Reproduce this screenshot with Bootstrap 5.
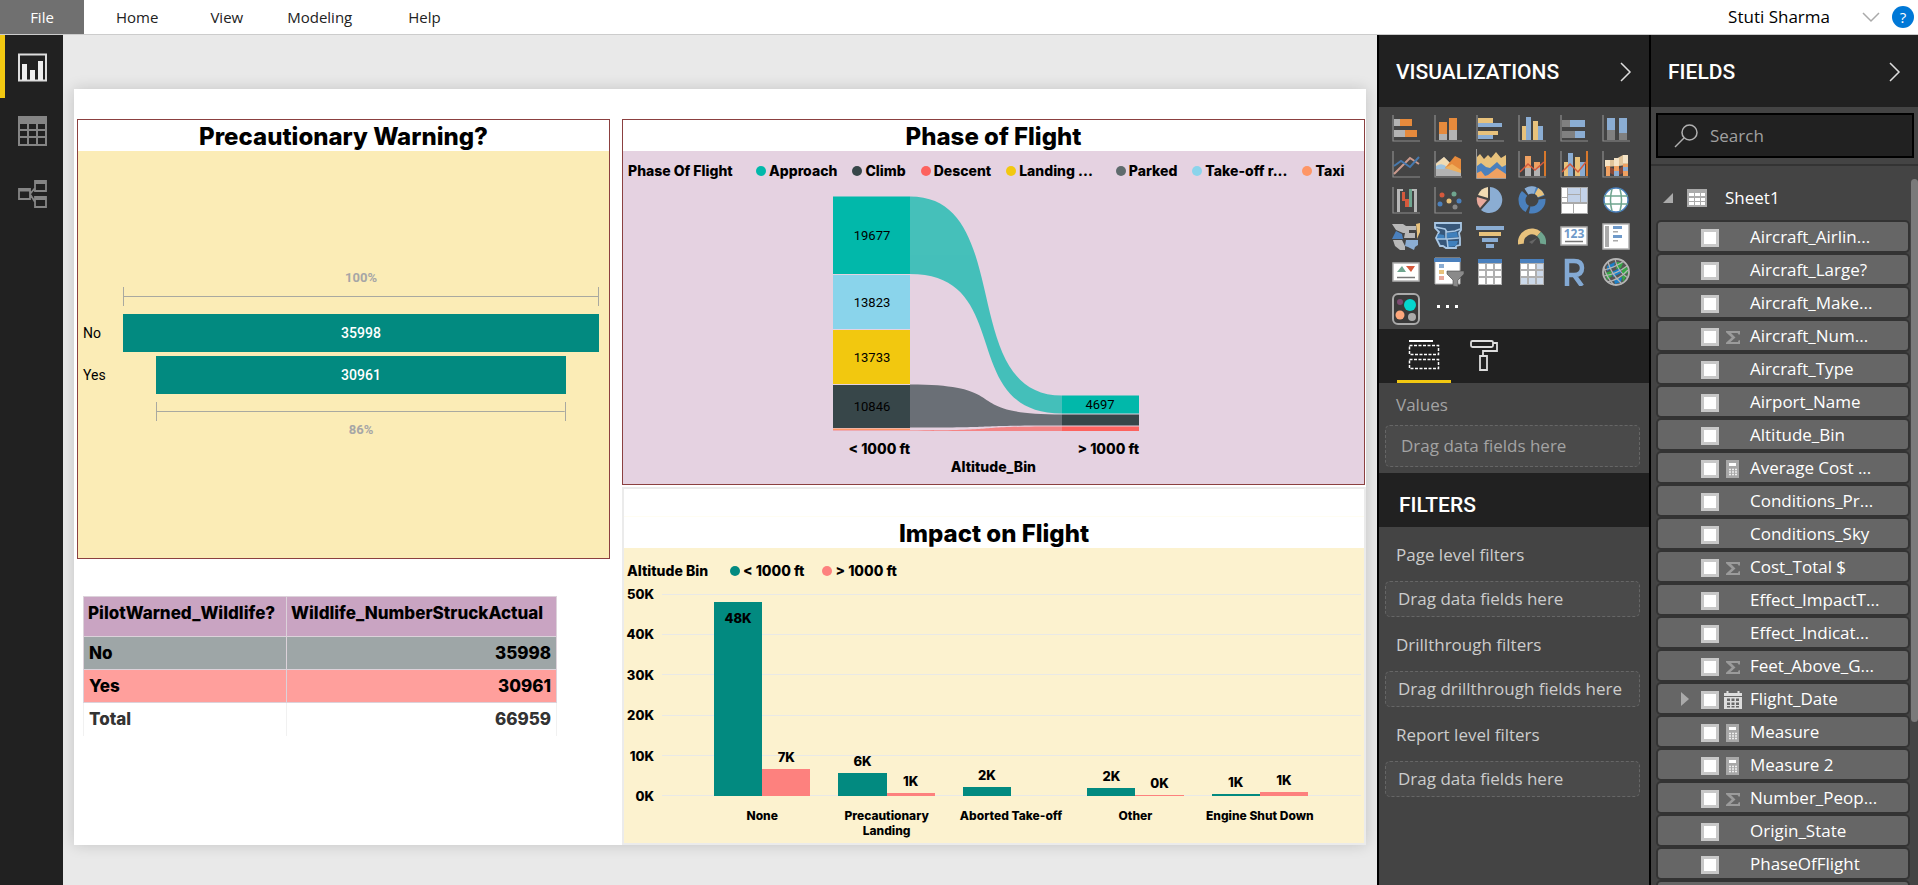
<!DOCTYPE html>
<html lang="en">
<head>
<meta charset="utf-8">
<meta name="viewport" content="width=device-width, initial-scale=1">
<title>Wildlife strikes report</title>
<link href="https://cdn.jsdelivr.net/npm/bootstrap@5.3.0/dist/css/bootstrap.min.css" rel="stylesheet">
<style>
:root{--ui:"Open Sans","Segoe UI",sans-serif;--din:Roboto,"DIN",sans-serif;--heavy:Inter,"Arial Black",sans-serif;--ink:#212121;--pane:#444;--teal:#028a80;--pink:#fd817e}
body{font-family:var(--ui);font-size:17px;line-height:24px;color:#000;background:#e9e9e9}
ul{list-style:none;margin:0;padding:0}
svg{display:block}
button{border:0;background:none;padding:0;color:inherit}
.shell{height:100vh;min-height:700px;overflow:hidden}
/* menu bar */
.topbar{height:35px;background:#fff;border-bottom:1px solid #ccc}
.topbar .tab{color:#222;text-decoration:none;font-size:15px}
.topbar .file-tab{width:84px;background:#707070;color:#fff}
.topbar .tab-wide{margin-right:2px;padding-right:2px}
.help-dot{width:22px;height:22px;border-radius:50%;background:#0078d7;color:#fff;font-size:15px;line-height:20px}
/* view switcher */
.rail{width:63px;background:var(--ink)}
.rail button{height:63px;width:63px;border-left:5px solid transparent;padding:2px 0 0 13px}
.rail button.on{border-left-color:#f2c811}
/* report canvas */
.desk{min-width:0;padding:54px 11px 40px}
.sheet{background:#fff;box-shadow:0 0 14px rgba(0,0,0,.16);padding:30px 0 0 3px;gap:12px;font-family:var(--heavy);font-weight:800}
.col-l{flex:533 1 0;min-width:0}
.col-r{flex:744 1 0;min-width:0;gap:2px}
.visual{border:1px solid #8b4040;min-height:0}
.visual h2{font-size:24px;line-height:29px;padding-top:2px;font-weight:800;margin:0;text-align:center;background:#fff}
.v-funnel{background:#fbecb6;flex:439 1 0}
.v-ribbon{background:#e5d2e1;flex:366 1 0;margin-right:1px}
.v-bars{background:#fcf2cf;border:2px solid #ebebeb;flex:356 1 0}
.v-bars .blank{height:28px;background:#fff;border-bottom:1px solid #fffdf2}
.below{flex:250 1 0;padding:37px 0 0 6px}
/* funnel */
.funnel{font-family:var(--din);font-weight:400;font-size:14px;padding-right:10px}
.funnel .row-f{display:grid;grid-template-columns:45px 1fr;align-items:center}
.funnel .name{padding-left:5px}
.funnel .fill{height:38px;background:var(--teal);color:#fff;font-weight:500;line-height:38px;text-align:center;margin:0 auto}
.funnel .pct{color:#a6a6a6;font-weight:700;font-size:13px;line-height:18px;text-align:center;grid-column:2}
.bracket{grid-column:2;height:19px;border:solid #a9a9a0;border-width:0 1px;margin:0 auto;background:linear-gradient(#a9a9a0,#a9a9a0) center/100% 1px no-repeat}
/* legends */
.legend{height:37px;font-size:14px;gap:15px;padding:2px 0 0 5px;white-space:nowrap}
.legend .head{min-width:113px}
.legend li,.legend ul{display:flex;align-items:center}
.legend ul{gap:15px}
.legend li::before{content:"";width:10px;height:10px;border-radius:50%;background:var(--c);margin-right:3px}
.v-bars .legend{padding-left:3px}
.v-bars .legend .head{min-width:88px}
.v-bars .legend ul{gap:18px}
/* clustered columns */
.plotbox{flex:1;min-height:0;padding:5px 3px 47px 0}
.axis-y{width:30px;margin:-8px 8px -8px 0;text-align:right;font-size:13px;line-height:16px}
.axis-y,.gridlines{display:flex;flex-direction:column;justify-content:space-between}
.plot{flex:1;padding:0 39px 0 38px}
.gridlines{position:absolute;inset:0}
.gridlines i{height:1px;background:#e9e9e6}
.cat{flex:1;padding:0 14px}
.cat>div{flex:1;display:flex;flex-direction:column;justify-content:flex-end;text-align:center;font-size:13px;line-height:16px}
.cat .lab{margin-bottom:4px}
.cat i{display:block;background:var(--teal);font-style:normal;padding-top:8px}
.cat i.flat{padding:0}
.cat>div+div i{background:var(--pink)}
.cats{position:absolute;left:38px;right:39px;top:100%;padding-top:12px;display:flex;font-size:12px;line-height:15px;text-align:center}
.cats li{flex:1;min-width:0}
/* summary table */
.sum{font-size:17px;line-height:24px;border-collapse:collapse;width:474px;max-width:100%}
.sum th,.sum td{padding:4px 5px 4px 5px;border:1px solid #dcd2da;font-weight:800}
.sum td+td,.sum th+td{text-align:right}
.sum thead th{background:#c9a4c2;height:40px;padding:4px 4px 11px 4px}
.sum thead th:first-child{width:203px}
.sum .r-no>*{background:#9ea6a7}
.sum .r-yes>*{background:#ff9f9c}
.sum tfoot>tr>*{color:#333;border-color:#f1f1f1;border-bottom-color:transparent}
/* right panes */
.pane{background:var(--pane);border-left:2px solid #000;color:#fff}
.pane-v{width:272px}
.pane-f{width:269px}
.pane-head{background:var(--ink);height:72px;padding:2px 17px 0 17px}
.pane-head h2,.sub-head{font-family:var(--din);font-size:21px;line-height:24px;font-weight:500;margin:0}
.gallery{display:grid;grid-template-columns:repeat(6,42px);grid-auto-rows:36px;padding:6px 0 0 13px}
.gallery button{width:30px;height:30px}
.tabs{height:54px;background:var(--ink);padding-left:18px;gap:6px}
.tabs button{width:54px;height:54px;border-bottom:3px solid transparent}
.tabs button.on{border-color:#f2c811}
.well{margin:0 9px 0 6px;border:1px dashed #666;border-radius:5px;background:#4a4a4a;height:36px;padding:0 12px;line-height:34px;color:#ccc}
.well-label{padding:16px 17px 14px;color:#ccc;line-height:24px}
.values .well{height:42px;line-height:40px;padding:0 15px}
.values .well,.values .well-label{color:#a3a3a3}
.values .well-label{padding:10px 17px 8px}
.values{padding-bottom:6px}
.sub-head{height:54px;background:var(--ink);padding:20px 20px 10px}
.search{margin:6px 4px 6px 5px;height:45px;border:2px solid #000;background:var(--ink);padding-left:16px;gap:10px}
.search input{border:0;background:none;color:#fff;outline:0;min-width:0;width:100%;font-size:17px}
.search input::placeholder{color:#a0a0a0}
.tree{border-top:2px solid #333;padding:10px 0 0 5px;position:relative;overflow:hidden;min-height:0}
.tree .root{height:44px;padding-left:7px;gap:14px}
.tree li{height:33px;margin-right:8px;border:2px solid #333;border-radius:5px;background:#666;box-sizing:border-box}
.tree label{display:flex;align-items:center;height:29px;padding-left:43px;position:relative}
.tree label svg{width:18px;height:18px;margin:3px 8px 0 5px;flex:none}
.tree label svg.caret{position:absolute;left:23px;top:8px;margin:0;width:8px;height:14px}
.tree input{appearance:none;width:18px;height:18px;border:3px solid #c8c8c8;background:#fff;margin:3px 0 0;flex:none}
.tree label>span{line-height:24px;white-space:nowrap}
.tree label>input+span{margin-left:31px}
.thumb{position:absolute;right:0;top:13px;width:7px;height:543px;background:#7a7a7a;border-radius:4px}
</style>
</head>
<body>
<svg width="0" height="0" class="position-absolute" aria-hidden="true">
  <symbol id="sum" viewBox="0 0 18 18"><path d="M2 3h14v3.500h-1.500L13.500 5H7l4.500 4.500L6.500 14h7.500l.7-1.700H16V16H2v-1.200L7.700 9.500 2 4.200z" fill="#9b9b9b"/></symbol>
  <symbol id="calc" viewBox="0 0 18 18"><path d="M2 0h13v18H2z" fill="#a8a8a8"/><path d="M5 3h7v3H5z" fill="#fff"/><path d="M5 9.500h8M5 12h8M5 14.500h8" stroke="#eee" stroke-width="1.500" stroke-dasharray="2 1"/></symbol>
  <symbol id="cal" viewBox="0 0 18 18"><path d="M0 2h18v16H0z" fill="#ddd"/><path d="M0 5.500h18" stroke="#666"/><path d="M3.500 0v3M14.500 0v3" stroke="#ddd" stroke-width="2"/><path d="M3 7.500h3v2.500H3zM7.500 7.500h3v2.500h-3zM12 7.500h3v2.500h-3zM3 11.500h3V14H3zM7.500 11.500h3V14h-3zM12 11.500h3V14h-3zM3 15h3v1.500H3zM7.500 15h3v1.500h-3zM12 15h3v1.500h-3z" fill="#666"/></symbol>
  <symbol id="axis" viewBox="0 0 28 28"><path d="M1 1v26h27" fill="none" stroke="#8c8c8c" stroke-width="1.200"/></symbol>
</svg>

<div class="shell d-flex flex-column">
  <header class="topbar d-flex align-items-center flex-shrink-0">
    <nav class="d-flex align-items-center h-100">
      <a href="#" class="tab file-tab h-100 d-flex align-items-center justify-content-center">File</a>
      <a href="#" class="tab ms-4 ps-2">Home</a>
      <a href="#" class="tab tab-wide ms-5 ps-1">View</a>
      <a href="#" class="tab ms-4 ps-3">Modeling</a>
      <a href="#" class="tab ms-5 ps-2">Help</a>
    </nav>
    <div class="ms-auto d-flex align-items-center pe-1">
      <span class="me-4 pe-2">Stuti Sharma</span>
      <button type="button" aria-label="Account menu" class="me-2"><svg width="18" height="12" viewBox="0 0 18 12"><path d="M1 2l8 8 8-8" fill="none" stroke="#aaa" stroke-width="1.500"/></svg></button>
      <button type="button" class="help-dot ms-1" aria-label="Help">?</button>
    </div>
  </header>

  <div class="d-flex flex-fill" style="min-height:0">
    <aside class="rail flex-shrink-0 d-flex flex-column">
      <button type="button" class="on" aria-label="Report"><svg width="30" height="30" viewBox="0 0 30 30"><path d="M1 1.500h27v26H1z" fill="none" stroke="#ddd" stroke-width="2"/><path d="M4 11h5v16H4zM12 17h5v10h-5zM20 8h5v19h-5z" fill="#eee"/></svg></button>
      <button type="button" aria-label="Data"><svg width="30" height="30" viewBox="0 0 30 30"><path d="M0 0h29v30H0z" fill="#858585"/><path d="M2 8h7v5H2zM11 8h7v5h-7zM20 8h7v5h-7zM2 15h7v5H2zM11 15h7v5h-7zM20 15h7v5h-7zM2 22h7v6H2zM11 22h7v6h-7zM20 22h7v6h-7z" fill="#212121"/></svg></button>
      <button type="button" aria-label="Model"><svg width="30" height="30" viewBox="0 0 30 30" fill="none" stroke="#858585" stroke-width="1.800"><path d="M1 10h11v10H1zM17 2h11v10H17zM17 18h11v10H17zM12 15l5-6M12 15l5 8"/><path d="M1 11h11M17 3.500h11M17 19.500h11" stroke-width="3"/></svg></button>
    </aside>

    <main class="desk flex-fill d-flex">
      <div class="sheet d-flex flex-fill">
        <div class="col-l d-flex flex-column">
          <section class="visual v-funnel d-flex flex-column">
            <h2>Precautionary Warning?</h2>
            <div class="funnel flex-fill d-flex flex-column justify-content-center">
              <div class="row-f"><span class="pct">100%</span></div>
              <div class="row-f mb-2"><div class="bracket w-100"></div></div>
              <div class="row-f mb-1"><span class="name">No</span><div class="fill" style="width:100%">35998</div></div>
              <div class="row-f mb-2"><span class="name">Yes</span><div class="fill" style="width:86%">30961</div></div>
              <div class="row-f"><div class="bracket" style="width:86%"></div></div>
              <div class="row-f"><span class="pct">86%</span></div>
            </div>
          </section>
          <div class="below">
            <table class="sum">
              <thead><tr><th>PilotWarned_Wildlife?</th><th>Wildlife_NumberStruckActual</th></tr></thead>
              <tbody><tr class="r-no"><td>No</td><td>35998</td></tr><tr class="r-yes"><td>Yes</td><td>30961</td></tr></tbody>
              <tfoot><tr><th>Total</th><td>66959</td></tr></tfoot>
            </table>
          </div>
        </div>

        <div class="col-r d-flex flex-column">
          <section class="visual v-ribbon d-flex flex-column">
            <h2>Phase of Flight</h2>
            <div class="legend d-flex align-items-center">
              <span class="head">Phase Of Flight</span>
              <ul>
                <li style="--c:#01b8aa">Approach</li><li style="--c:#374649">Climb</li><li style="--c:#fd625e">Descent</li><li class="me-2" style="--c:#f2c80f">Landing ...</li><li style="--c:#5f6b6d">Parked</li><li style="--c:#8ad4eb">Take-off r...</li><li style="--c:#fe9666">Taxi</li>
              </ul>
            </div>
            <svg class="w-100 flex-fill" style="min-height:0" viewBox="0 0 741 295" role="img" aria-label="Strikes by phase of flight and altitude">
              <g opacity=".7">
                <path d="M287 8C393 8 333 207 439 207V225C333 225 393 85.500 287 85.500z" fill="#01b8aa"/>
                <path d="M287 196C393 196 333 226 439 226V237C333 237 393 239 287 239z" fill="#374649"/>
                <path d="M210 242H287C393 242 333 238 439 238V242.500H210z" fill="#fd625e"/>
              </g>
              <path d="M210 8h77v77.500h-77zM439 207h77v18h-77z" fill="#01b8aa"/>
              <path d="M210 86.500h77v54h-77z" fill="#8ad4eb"/>
              <path d="M210 141.500h77v54h-77z" fill="#f2c80f"/>
              <path d="M210 196.500h77v43h-77zM439 226h77v11h-77z" fill="#374649"/>
              <path d="M210 240h77v1.500h-77z" fill="#fe9666"/>
              <path d="M439 238h77v4.500h-77z" fill="#fd625e"/>
              <g font-family="Roboto, sans-serif" font-size="13" font-weight="400" text-anchor="middle">
                <text x="249" y="52">19677</text><text x="249" y="119">13823</text><text x="249" y="174">13733</text><text x="249" y="223">10846</text><text x="477" y="221">4697</text>
              </g>
              <g font-size="14" text-anchor="end"><text x="287" y="266">&lt; 1000 ft</text><text x="516" y="266">&gt; 1000 ft</text><text x="413" y="284">Altitude_Bin</text></g>
            </svg>
          </section>

          <section class="visual v-bars d-flex flex-column">
            <div class="blank"></div>
            <h2>Impact on Flight</h2>
            <div class="legend d-flex align-items-center mt-1"><span class="head">Altitude Bin</span><ul><li style="--c:#028a80">&lt; 1000 ft</li><li style="--c:#fd817e">&gt; 1000 ft</li></ul></div>
            <div class="plotbox d-flex">
              <div class="axis-y"><span>50K</span><span>40K</span><span>30K</span><span>20K</span><span>10K</span><span>0K</span></div>
              <div class="plot position-relative d-flex">
                <div class="gridlines"><i></i><i></i><i></i><i></i><i></i><i></i></div>
                <div class="cat d-flex position-relative"><div><i style="height:96%">48K</i></div><div><span class="lab">7K</span><i class="flat" style="height:13.500%"></i></div></div>
                <div class="cat d-flex position-relative"><div><span class="lab">6K</span><i class="flat" style="height:11.500%"></i></div><div><span class="lab">1K</span><i class="flat" style="height:1.500%"></i></div></div>
                <div class="cat d-flex position-relative"><div><span class="lab">2K</span><i class="flat" style="height:4.500%"></i></div><div></div></div>
                <div class="cat d-flex position-relative"><div><span class="lab">2K</span><i class="flat" style="height:4%"></i></div><div><span class="lab">0K</span><i class="flat" style="height:.7%"></i></div></div>
                <div class="cat d-flex position-relative"><div><span class="lab">1K</span><i class="flat" style="height:1%"></i></div><div><span class="lab">1K</span><i class="flat" style="height:1.800%"></i></div></div>
                <ul class="cats"><li>None</li><li>Precautionary Landing</li><li>Aborted Take-off</li><li>Other</li><li>Engine Shut Down</li></ul>
              </div>
            </div>
          </section>
        </div>
      </div>
    </main>

    <aside class="pane pane-v flex-shrink-0">
      <div class="pane-head d-flex align-items-center justify-content-between"><h2>VISUALIZATIONS</h2><button type="button" aria-label="Collapse visualizations"><svg width="12" height="20" viewBox="0 0 12 20"><path d="M1 1l9 9-9 9" fill="none" stroke="#ddd" stroke-width="1.500"/></svg></button></div>
      <div class="gallery">
        <button type="button" aria-label="Stacked bar"><svg width="28" height="28" viewBox="0 0 28 28"><use href="#axis"/><path d="M2 5h6v7H2zM2 16h11v7H2z" fill="#b3b3b3"/><path d="M8 5h12v7H8zM13 16h12v7H13z" fill="#e68a3c"/></svg></button>
        <button type="button" aria-label="Stacked column"><svg width="28" height="28" viewBox="0 0 28 28"><use href="#axis"/><path d="M5 20h8v6H5zM15 16h8v10h-8z" fill="#b3b3b3"/><path d="M5 8h8v12H5zM15 4h8v12h-8z" fill="#e68a3c"/></svg></button>
        <button type="button" aria-label="Clustered bar"><svg width="28" height="28" viewBox="0 0 28 28"><use href="#axis"/><path d="M2 4h15v5H2zM2 17h20v4H2z" fill="#e8c27c"/><path d="M2 9h24v4H2zM2 21h15v4H2z" fill="#8badd3"/></svg></button>
        <button type="button" aria-label="Clustered column"><svg width="28" height="28" viewBox="0 0 28 28"><use href="#axis"/><path d="M4 12h4v14H4zM15 7h5v19h-5z" fill="#e8c27c"/><path d="M8 3h5v23H8zM20 12h5v14h-5z" fill="#8badd3"/></svg></button>
        <button type="button" aria-label="100% stacked bar"><svg width="28" height="28" viewBox="0 0 28 28"><use href="#axis"/><path d="M2 6h8v7H2zM2 17h13v7H2z" fill="#808080"/><path d="M10 6h15v7H10zM15 17h10v7H15z" fill="#8badd3"/></svg></button>
        <button type="button" aria-label="100% stacked column"><svg width="28" height="28" viewBox="0 0 28 28"><use href="#axis"/><path d="M5 16h8v10H5zM17 19h8v7h-8z" fill="#808080"/><path d="M5 4h8v12H5zM17 4h8v15h-8z" fill="#8badd3"/></svg></button>

        <button type="button" aria-label="Line"><svg width="28" height="28" viewBox="0 0 28 28"><use href="#axis"/><g fill="none" stroke-width="2"><path d="M2 24L18 8l9 6" stroke="#cb9a8d"/><path d="M2 16l7-5 9 6 9-10" stroke="#4678ad"/></g></svg></button>
        <button type="button" aria-label="Area"><svg width="28" height="28" viewBox="0 0 28 28"><use href="#axis"/><path d="M2 26V13l8-6 8 8 9 1v10z" fill="#b3b3b3"/><path d="M2 14l8-7 7 7-5 4H2z" fill="#f1dbb3"/><path d="M2 16q6-4 11 1l-3 2H2z" fill="#9fc3e0"/><path d="M11 18L21 6l6 3v11l-9-1z" fill="#e68a3c"/><path d="M11 18l7-4 9 6v3z" fill="#efaf5c"/></svg></button>
        <button type="button" aria-label="Stacked area"><svg width="30" height="30" viewBox="0 0 30 30"><path d="M.500 0v29.500H30" fill="none" stroke="#999"/><path d="M1 8l3-3 4 5 4-4 3 3 5-6 5 6 5-3v22H1z" fill="#e8c27c"/><path d="M1 17l4-3 5 4 4 1 7-6 5 5 4-2v13H1z" fill="#4a80bd"/><path d="M1 24l4-2 4 5 3-1 9-7 9 6v4H1z" fill="#efa162"/></svg></button>
        <button type="button" aria-label="Line and stacked column"><svg width="28" height="28" viewBox="0 0 28 28"><use href="#axis"/><path d="M7 18h6v8H7zM16 18h6v8h-6z" fill="#b3b3b3"/><path d="M7 6h6v12H7zM16 12h6v6h-6z" fill="#efa162"/><path d="M2 22l8-8 7 6 9-8" fill="none" stroke="#d5593c" stroke-width="1.500"/><path d="M27 1v25" stroke="#d8782c" stroke-width="2"/></svg></button>
        <button type="button" aria-label="Line and clustered column"><svg width="28" height="28" viewBox="0 0 28 28"><use href="#axis"/><path d="M4 12h4v14H4zM15 7h5v19h-5z" fill="#e8c27c"/><path d="M8 3h5v23H8zM20 12h5v14h-5z" fill="#8badd3"/><path d="M2 22l8-8 8 8 8-10" fill="none" stroke="#d5593c" stroke-width="1.500"/><path d="M27 1v25" stroke="#d8782c" stroke-width="2"/></svg></button>
        <button type="button" aria-label="Ribbon"><svg width="28" height="28" viewBox="0 0 28 28"><use href="#axis"/><path d="M3 10h9l9-5h5v10l-10 1-13 1z" fill="#e0c49a"/><path d="M4 16h4v10H4zM12 16h5v10h-5zM21 14h5v12h-5z" fill="#efa162"/><path d="M8 17l4 2v6l-4-2zM17 19l4-3v7l-4 2z" fill="#8a4a38"/><path d="M12 21h5v5h-5zM21 17h5v4h-5z" fill="#8badd3"/><path d="M12 8h5v8h-5zM3 10h5v6H3zM21 5h5v8h-5z" fill="#f4e3c6"/></svg></button>

        <button type="button" aria-label="Waterfall"><svg width="28" height="28" viewBox="0 0 28 28"><use href="#axis"/><path d="M5 3h6v2H8v21H5zM20 3h5v23h-3V5h-2z" fill="#b8b8b8"/><path d="M10 6h3v9h-3zM13 13h4v8h-4z" fill="#d5593c"/><path d="M17 3h3v18h-3z" fill="#6fa58f"/></svg></button>
        <button type="button" aria-label="Scatter"><svg width="28" height="28" viewBox="0 0 28 28"><use href="#axis"/><circle cx="8" cy="9" r="2.500" fill="#d5593c"/><circle cx="20" cy="8" r="2.500" fill="#6fa58f"/><circle cx="15" cy="15" r="2.500" fill="#e8c27c"/><circle cx="6" cy="18" r="2.500" fill="#4a80bd"/><circle cx="25" cy="15" r="2.500" fill="#4a80bd"/><circle cx="21" cy="21" r="2.500" fill="#888"/></svg></button>
        <button type="button" aria-label="Pie"><svg width="28" height="28" viewBox="0 0 28 28"><path d="M14 14V1a13 13 0 1 1-9 23z" fill="#8badd3"/><path d="M12 12V1A13 13 0 0 0 2 9z" fill="#f1dbb3"/><path d="M11 14L1 11a13 13 0 0 0 3 11z" fill="#e8a99c"/></svg></button>
        <button type="button" aria-label="Donut"><svg width="28" height="28" viewBox="0 0 28 28"><g fill="none" stroke-width="7"><circle cx="14" cy="14" r="10" stroke="#4a80bd" stroke-dasharray="18 2.500"/><path d="M8.500 5.500A10 10 0 0 1 17 4.400" stroke="#8badd3"/><path d="M18.500 5A10 10 0 0 1 23 10" stroke="#e8c27c"/></g></svg></button>
        <button type="button" aria-label="Treemap"><svg width="28" height="28" viewBox="0 0 28 28"><path d="M1 1h27v27H1z" fill="#aaa"/><path d="M2 2h5v9H2zM2 12h5v4H2zM2 18h11v9H2zM14 18h13v9H14z" fill="#fff"/><path d="M8 2h12v6H8zM8 9h12v7H8zM21 2h6v14h-6z" fill="#c3d2e8"/></svg></button>
        <button type="button" aria-label="Map"><svg width="28" height="28" viewBox="0 0 28 28"><circle cx="14" cy="14" r="12" fill="#fff" stroke="#4a80bd" stroke-width="1.500"/><path d="M2 10h24M2 18h24M10 3q-3 11 0 22M18 3q3 11 0 22" fill="none" stroke="#6fa58f" stroke-width="1.500"/></svg></button>

        <button type="button" aria-label="Filled map"><svg width="28" height="28" viewBox="0 0 28 28"><path d="M0 2h11l3 2h10v4h-7v3h-6L4 8z" fill="#b8b8b8"/><path d="M13 11h10v5H12zM1 18h9l3 6v4H8l-5-4z" fill="#b8b8b8"/><path d="M4 9l6 3 1 5H0z" fill="#4a80bd"/><path d="M24 2l4-1v9l-3 7v-6z" fill="#e8c27c"/><path d="M14 18h12v5l-3 2-1 3-6-3-3-1z" fill="#8badd3"/></svg></button>
        <button type="button" aria-label="Shape map"><svg width="28" height="28" viewBox="0 0 28 28"><path d="M1 1h26v7l-2 3 1 5v7l-4 1v2H12l-3-2H6l-4-8 3-6-4-4z" fill="#37577a" stroke="#a9c7e4" stroke-width="1.800"/><path d="M13 11l10-1 1 5-11 1zM4 12l6 1 1 4H3zM13 19h11l-2 5-9 1z" fill="#3f80bd"/><path d="M1 5l10 2 2 3 8-1 5-2M3 17h10l1 9M13 17l12-1M12 8v9" fill="none" stroke="#a9c7e4" stroke-width="1.500"/></svg></button>
        <button type="button" aria-label="Funnel"><svg width="28" height="28" viewBox="0 0 28 28"><path d="M0 4h28v4H0zM6 16h16v4H6zM10 22h8v4h-8z" fill="#8badd3"/><path d="M3 10h22v4H3z" fill="#e8c27c"/></svg></button>
        <button type="button" aria-label="Gauge"><svg width="28" height="28" viewBox="0 0 28 28"><g fill="none" stroke-width="6"><path d="M3 22A11 11 0 0 1 21 12" stroke="#e8c27c"/><path d="M21 12a11 11 0 0 1 4 10" stroke="#6fa58f"/></g><path d="M11 20l8-4-5 6z" fill="#666"/></svg></button>
        <button type="button" aria-label="Card"><svg width="28" height="28" viewBox="0 0 28 28"><path d="M1 5h26v18H1z" fill="#fff" stroke="#b0b0b0" stroke-width="1.500"/><text x="14" y="16" font-size="12" font-weight="700" text-anchor="middle" fill="#6f9aca" font-family="Open Sans, sans-serif">123</text><path d="M5 19.500h18" stroke="#777" stroke-width="1.500"/></svg></button>
        <button type="button" aria-label="Multi-row card"><svg width="28" height="28" viewBox="0 0 28 28"><path d="M1 2h26v25H1z" fill="#fff" stroke="#b0b0b0" stroke-width="1.500"/><path d="M3 4h4v21H3z" fill="#aaa"/><path d="M11 4h9v3h-9zM11 13h9v3h-9z" fill="#6f9aca"/><path d="M11 9h5v1.500h-5zM11 18h5v1.500h-5z" fill="#aaa"/></svg></button>

        <button type="button" aria-label="KPI"><svg width="28" height="28" viewBox="0 0 28 28"><path d="M1 5h26v18H1z" fill="#fff" stroke="#b0b0b0" stroke-width="1.500"/><path d="M5 14h9l-4-6z" fill="#6fa58f"/><path d="M14 8h9l-4 6z" fill="#d5593c"/><path d="M5 19.500h18" stroke="#777" stroke-width="1.500"/></svg></button>
        <button type="button" aria-label="Slicer"><svg width="30" height="30" viewBox="0 0 30 30"><path d="M1 1h25v26H1z" fill="#fff" stroke="#b0b0b0"/><path d="M0 1h27v4H0z" fill="#4a80bd"/><path d="M5 7h5v4H5z" fill="#8badd3"/><path d="M5 13h5v4H5z" fill="#e8c27c"/><path d="M5 19h5v4H5z" fill="#e8a99c"/><path d="M13 14h17v3l-6 6v7l-5-1v-6l-6-6z" fill="#8a8a8a" stroke="#444" stroke-width=".6"/></svg></button>
        <button type="button" aria-label="Table"><svg width="28" height="28" viewBox="0 0 28 28"><path d="M2 1h24v26H2z" fill="#b0b0b0"/><path d="M2 1h24v4H2z" fill="#4a80bd"/><path d="M3 6h6v5H3zM11 6h6v5h-6zM19 6h6v5h-6zM3 13h6v5H3zM11 13h6v5h-6zM19 13h6v5h-6zM3 20h6v6H3zM11 20h6v6h-6zM19 20h6v6h-6z" fill="#fff"/></svg></button>
        <button type="button" aria-label="Matrix"><svg width="28" height="28" viewBox="0 0 28 28"><path d="M2 1h24v26H2z" fill="#b0b0b0"/><path d="M2 1h24v4H2z" fill="#4a80bd"/><path d="M3 6h6v5H3zM11 6h6v5h-6zM3 13h6v5H3zM11 13h6v5h-6z" fill="#fff"/><path d="M19 6h6v5h-6zM19 13h6v5h-6zM3 20h6v6H3zM11 20h6v6h-6zM19 20h6v6h-6z" fill="#ccd9ea"/></svg></button>
        <button type="button" aria-label="R script"><svg width="28" height="28" viewBox="0 0 28 28"><path d="M7 28V3h7q8 0 8 7t-8 7H7M14 17l8 11" fill="none" stroke="#83a9d3" stroke-width="4.500"/></svg></button>
        <button type="button" aria-label="ArcGIS map"><svg width="28" height="28" viewBox="0 0 28 28"><circle cx="14" cy="14" r="13" fill="#555" stroke="#b5b5b5" stroke-width="1.800"/><path d="M5 8l8-4-1 5-7 4zM10 14l8-4 1 5-8 4zM12 22l8-3-1 5-6 2z" fill="#1c80c8"/><path d="M15 4l6 1-2 5-5 1zM20 10l5-1 1 6-6 2zM3 15l6-2 1 5-5 4zM20 18l5-1-4 7z" fill="#35a845"/><path d="M2 12Q14 9 22 3M2 18q13-2 23-10M5 24q12-2 21-12M6 4q3 12 14 22M13 1q2 12 13 19M2 10q3 10 10 17" fill="none" stroke="#b5b5b5" stroke-width="1.200"/></svg></button>

        <button type="button" aria-label="Custom visual"><svg width="28" height="33" viewBox="0 0 28 33"><rect x="1" y="1" width="26" height="30" rx="5" fill="#3a3a3a" stroke="#aaa" stroke-width="2"/><circle cx="8" cy="9" r="3" fill="#7c4a70"/><circle cx="18" cy="12" r="6" fill="#05d5cd"/><circle cx="8" cy="22" r="4.500" fill="#fda77c"/><circle cx="20" cy="24" r="4" fill="#aaa"/></svg></button>
        <button type="button" aria-label="More visuals"><svg width="28" height="28" viewBox="0 0 28 28" fill="#fff"><path d="M3 11h3v3H3zM12 11h3v3h-3zM21 11h3v3h-3z"/></svg></button>
      </div>
      <div class="tabs d-flex">
        <button type="button" class="on d-flex align-items-center justify-content-center" aria-label="Fields"><svg width="32" height="32" viewBox="0 0 32 32" fill="none" stroke="#fff"><path d="M1 2h24" stroke-width="2"/><path d="M1.500 6.500h29v9h-29zM1.500 20.500h29v9h-29z" stroke-width="1.500" stroke-dasharray="3 1.500"/></svg></button>
        <button type="button" class="d-flex align-items-center justify-content-center" aria-label="Format"><svg width="30" height="32" viewBox="0 0 30 32" fill="none" stroke="#ddd" stroke-width="1.800"><rect x="2" y="2" width="22" height="6" rx="1.500"/><path d="M24 4h4v8H14v5M11 17h7v14h-7z"/></svg></button>
      </div>
      <div class="values"><div class="well-label">Values</div><div class="well">Drag data fields here</div></div>
      <h2 class="sub-head">FILTERS</h2>
      <div class="well-label">Page level filters</div><div class="well">Drag data fields here</div>
      <div class="well-label">Drillthrough filters</div><div class="well">Drag drillthrough fields here</div>
      <div class="well-label">Report level filters</div><div class="well">Drag data fields here</div>
    </aside>

    <aside class="pane pane-f flex-shrink-0 d-flex flex-column">
      <div class="pane-head d-flex align-items-center justify-content-between flex-shrink-0"><h2>FIELDS</h2><button type="button" aria-label="Collapse fields"><svg width="12" height="20" viewBox="0 0 12 20"><path d="M1 1l9 9-9 9" fill="none" stroke="#ddd" stroke-width="1.500"/></svg></button></div>
      <label class="search d-flex align-items-center flex-shrink-0"><svg width="24" height="24" viewBox="0 0 24 24" class="flex-shrink-0"><circle cx="15.500" cy="8.500" r="7.500" fill="none" stroke="#b0b0b0" stroke-width="1.500"/><path d="M10 14L1 23" stroke="#b0b0b0" stroke-width="1.500"/></svg><input type="text" placeholder="Search" aria-label="Search"></label>
      <div class="tree flex-fill">
        <div class="root d-flex align-items-center"><svg width="10" height="10" viewBox="0 0 10 10"><path d="M10 0v10H0z" fill="#aaa"/></svg><svg width="20" height="18" viewBox="0 0 20 18"><path d="M0 0h20v18H0z" fill="#aaa"/><path d="M2 4h5v3H2zM8 4h5v3H8zM14 4h4v3h-4zM2 9h5v3H2zM8 9h5v3H8zM14 9h4v3h-4zM2 13h5v3H2zM8 13h5v3H8zM14 13h4v3h-4z" fill="#fff"/></svg><span class="ms-1">Sheet1</span></div>
        <ul>
          <li><label><input type="checkbox"><span>Aircraft_Airlin...</span></label></li>
          <li><label><input type="checkbox"><span>Aircraft_Large?</span></label></li>
          <li><label><input type="checkbox"><span>Aircraft_Make...</span></label></li>
          <li><label><input type="checkbox"><svg><use href="#sum"/></svg><span>Aircraft_Num...</span></label></li>
          <li><label><input type="checkbox"><span>Aircraft_Type</span></label></li>
          <li><label><input type="checkbox"><span>Airport_Name</span></label></li>
          <li><label><input type="checkbox"><span>Altitude_Bin</span></label></li>
          <li><label><input type="checkbox"><svg><use href="#calc"/></svg><span>Average Cost ...</span></label></li>
          <li><label><input type="checkbox"><span>Conditions_Pr...</span></label></li>
          <li><label><input type="checkbox"><span>Conditions_Sky</span></label></li>
          <li><label><input type="checkbox"><svg><use href="#sum"/></svg><span>Cost_Total $</span></label></li>
          <li><label><input type="checkbox"><span>Effect_ImpactT...</span></label></li>
          <li><label><input type="checkbox"><span>Effect_Indicat...</span></label></li>
          <li><label><input type="checkbox"><svg><use href="#sum"/></svg><span>Feet_Above_G...</span></label></li>
          <li><label><svg class="caret" viewBox="0 0 8 14"><path d="M0 0l8 7-8 7z" fill="#aaa"/></svg><input type="checkbox"><svg><use href="#cal"/></svg><span>Flight_Date</span></label></li>
          <li><label><input type="checkbox"><svg><use href="#calc"/></svg><span>Measure</span></label></li>
          <li><label><input type="checkbox"><svg><use href="#calc"/></svg><span>Measure 2</span></label></li>
          <li><label><input type="checkbox"><svg><use href="#sum"/></svg><span>Number_Peop...</span></label></li>
          <li><label><input type="checkbox"><span>Origin_State</span></label></li>
          <li><label><input type="checkbox"><span>PhaseOfFlight</span></label></li>
          <li></li>
        </ul>
        <div class="thumb"></div>
      </div>
    </aside>
  </div>
</div>
<script src="https://cdn.jsdelivr.net/npm/bootstrap@5.3.0/dist/js/bootstrap.bundle.min.js"></script>
</body>
</html>
